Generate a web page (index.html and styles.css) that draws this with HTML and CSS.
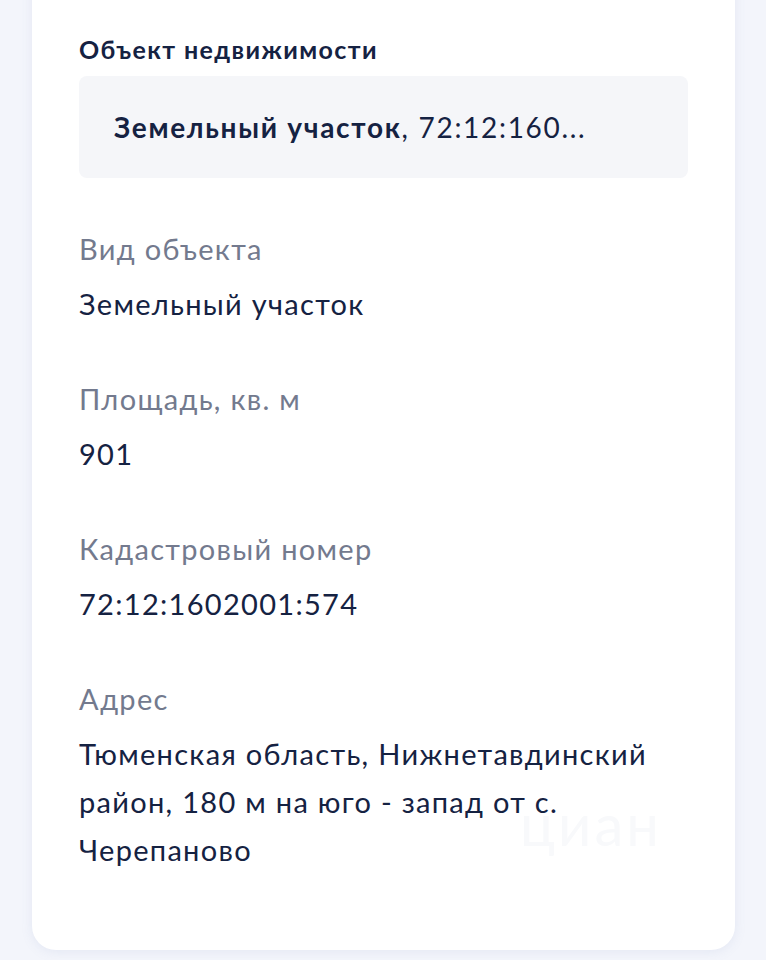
FILE: index.html
```html
<!DOCTYPE html>
<html lang="ru">
<head>
<meta charset="utf-8">
<link rel="stylesheet" href="styles.css">
</head>
<body>
<div class="page">
  <section class="card">
    <h2 class="title">Объект недвижимости</h2>
    <div class="object-box"><b>Земельный участок</b>, 72:12:160...</div>
    <dl class="props">
      <div class="prop">
        <dt>Вид объекта</dt>
        <dd>Земельный участок</dd>
      </div>
      <div class="prop">
        <dt>Площадь, кв. м</dt>
        <dd>901</dd>
      </div>
      <div class="prop">
        <dt>Кадастровый номер</dt>
        <dd>72:12:1602001:574</dd>
      </div>
      <div class="prop">
        <dt>Адрес</dt>
        <dd>Тюменская область, Нижнетавдинский район, 180 м на юго - запад от с. Черепаново</dd>
      </div>
    </dl>
    <div class="watermark">циан</div>
  </section>
</div>
</body>
</html>
```
FILE: styles.css
```css
html, body {
  margin: 0;
  padding: 0;
  background: #f3f5fb;
}
body {
  font-family: Lato, "Noto Sans", sans-serif;
  color: #152242;
  width: 766px;
  height: 960px;
  overflow: hidden;
}
.page {
  padding: 0 31px 12px 32px;
  margin-top: -36px;
}
.card {
  position: relative;
  background: #fff;
  border-radius: 0 0 24px 24px;
  box-shadow: 0 2px 12px rgba(120, 140, 190, 0.12);
  padding: 70px 47px 76px 47px;
}
.title {
  margin: 0 0 12px;
  font-size: 25px;
  line-height: 30px;
  font-weight: 700;
  letter-spacing: 1.4px;
}
.object-box {
  background: #f5f6f9;
  border-radius: 8px;
  height: 102px;
  padding: 0 35px;
  display: flex;
  align-items: center;
  font-size: 28px;
  letter-spacing: 1.7px;
}
.object-box b {
  font-weight: 700;
}
.props {
  margin: 47px 0 0;
  display: flex;
  flex-direction: column;
  gap: 47px;
}
.prop dt {
  font-size: 29px;
  line-height: 48px;
  color: #737a8e;
  letter-spacing: 1.3px;
}
.prop dd {
  margin: 7px 0 0;
  font-size: 29px;
  line-height: 48px;
  color: #152242;
  letter-spacing: 1.3px;
}
.watermark {
  position: absolute;
  left: 488px;
  bottom: 96px;
  font-size: 58px;
  line-height: 60px;
  color: #f8f9fb;
  letter-spacing: 3px;
}
```
